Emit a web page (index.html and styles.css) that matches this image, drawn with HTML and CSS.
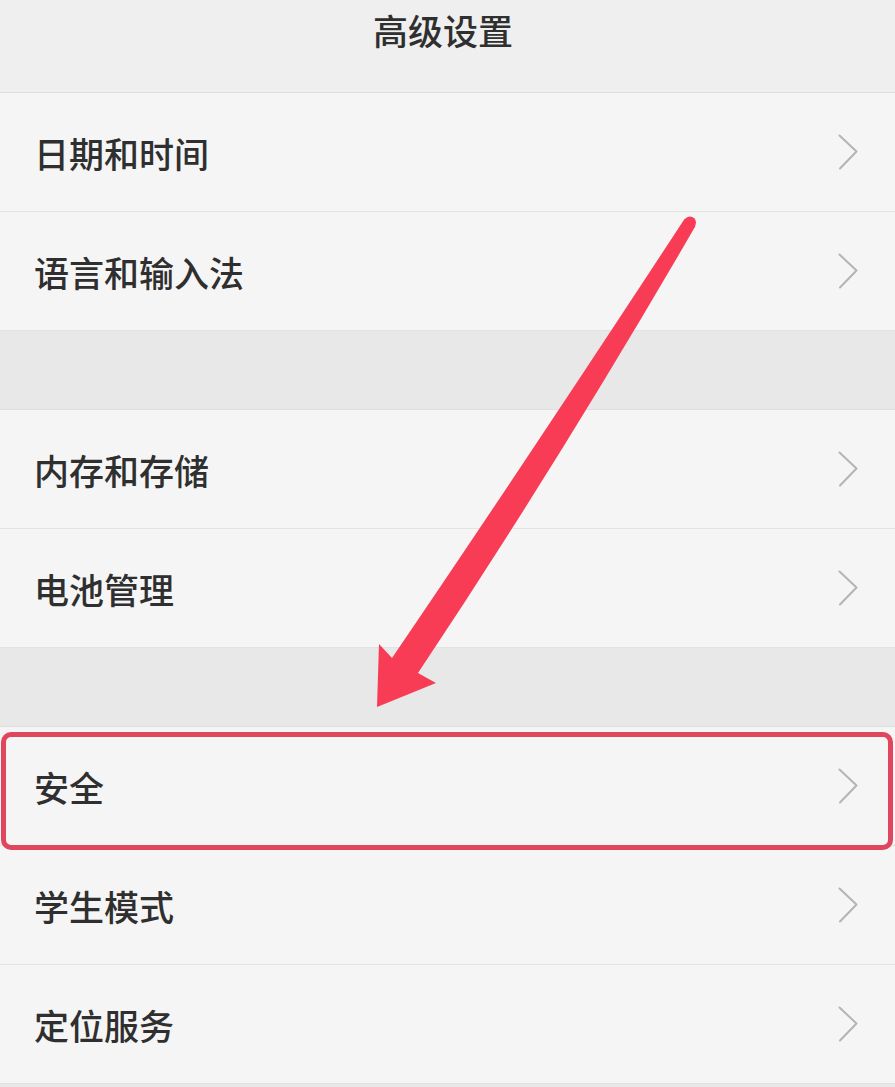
FILE: index.html
```html
<!DOCTYPE html>
<html lang="zh-CN">
<head>
<meta charset="utf-8">
<title>高级设置</title>
<link rel="stylesheet" href="styles.css">
</head>
<body>
<div class="page">
  <header class="title-bar"><h1 class="title">高级设置</h1></header>

  <section class="group">
    <div class="row"><span class="label">日期和时间</span><svg class="chev" viewBox="0 0 20 36"><polyline points="1.5,1.5 18.5,17.5 2,34.5"/></svg></div>
    <div class="row"><span class="label">语言和输入法</span><svg class="chev" viewBox="0 0 20 36"><polyline points="1.5,1.5 18.5,17.5 2,34.5"/></svg></div>
  </section>
  <div class="gap"></div>
  <section class="group">
    <div class="row"><span class="label">内存和存储</span><svg class="chev" viewBox="0 0 20 36"><polyline points="1.5,1.5 18.5,17.5 2,34.5"/></svg></div>
    <div class="row"><span class="label">电池管理</span><svg class="chev" viewBox="0 0 20 36"><polyline points="1.5,1.5 18.5,17.5 2,34.5"/></svg></div>
  </section>
  <div class="gap"></div>
  <section class="group">
    <div class="row"><span class="label">安全</span><svg class="chev" viewBox="0 0 20 36"><polyline points="1.5,1.5 18.5,17.5 2,34.5"/></svg></div>
    <div class="row"><span class="label">学生模式</span><svg class="chev" viewBox="0 0 20 36"><polyline points="1.5,1.5 18.5,17.5 2,34.5"/></svg></div>
    <div class="row"><span class="label">定位服务</span><svg class="chev" viewBox="0 0 20 36"><polyline points="1.5,1.5 18.5,17.5 2,34.5"/></svg></div>
  </section>

  <div class="highlight"></div>
  <svg class="arrow" viewBox="0 0 895 1087">
    <circle cx="690" cy="222.5" r="6"/>
    <path d="M684.5 219 Q 520 470 392 658 L 379 644 L 377 707 L 436 683 L 418 673 Q 560 460 695.5 226 Z"/>
  </svg>
</div>
</body>
</html>
```

FILE: styles.css
```css
html, body {
  margin: 0;
  padding: 0;
}
body {
  background: #e8e8e8;
  font-family: "Noto Sans CJK SC", "Noto Sans", sans-serif;
  color: #2f2f2f;
}
.page {
  position: relative;
  width: 895px;
  min-height: 1087px;
  overflow: hidden;
}
.title-bar {
  height: 92px;
  background: #efefef;
  border-bottom: 1px solid #dcdcdc;
  display: flex;
  justify-content: center;
  padding-right: 9px;
}
.title {
  margin: 0;
  padding-top: 5px;
  font-size: 35px;
  font-weight: 500;
  line-height: 50px;
  color: #2f2f2f;
}
.group {
  background: #f5f5f5;
}
.row {
  height: 118px;
  border-bottom: 1px solid #e2e2e2;
  display: flex;
  align-items: center;
  justify-content: space-between;
  padding: 0 37px 0 34px;
}
.label {
  font-size: 35px;
  font-weight: 500;
  line-height: 1;
  color: #2f2f2f;
}
.chev {
  width: 20px;
  height: 36px;
  fill: none;
  stroke: #b4b4b4;
  stroke-width: 2;
  stroke-linecap: round;
  stroke-linejoin: round;
}
.gap {
  height: 78px;
  background: #e8e8e8;
  border-bottom: 1px solid #dedede;
}
.highlight {
  position: absolute;
  left: 1px;
  top: 732px;
  width: 882px;
  height: 108px;
  border: 5px solid #e0475f;
  border-radius: 10px;
}
.arrow {
  position: absolute;
  left: 0;
  top: 0;
  width: 895px;
  height: 1087px;
  fill: #f83c56;
  pointer-events: none;
}
```
